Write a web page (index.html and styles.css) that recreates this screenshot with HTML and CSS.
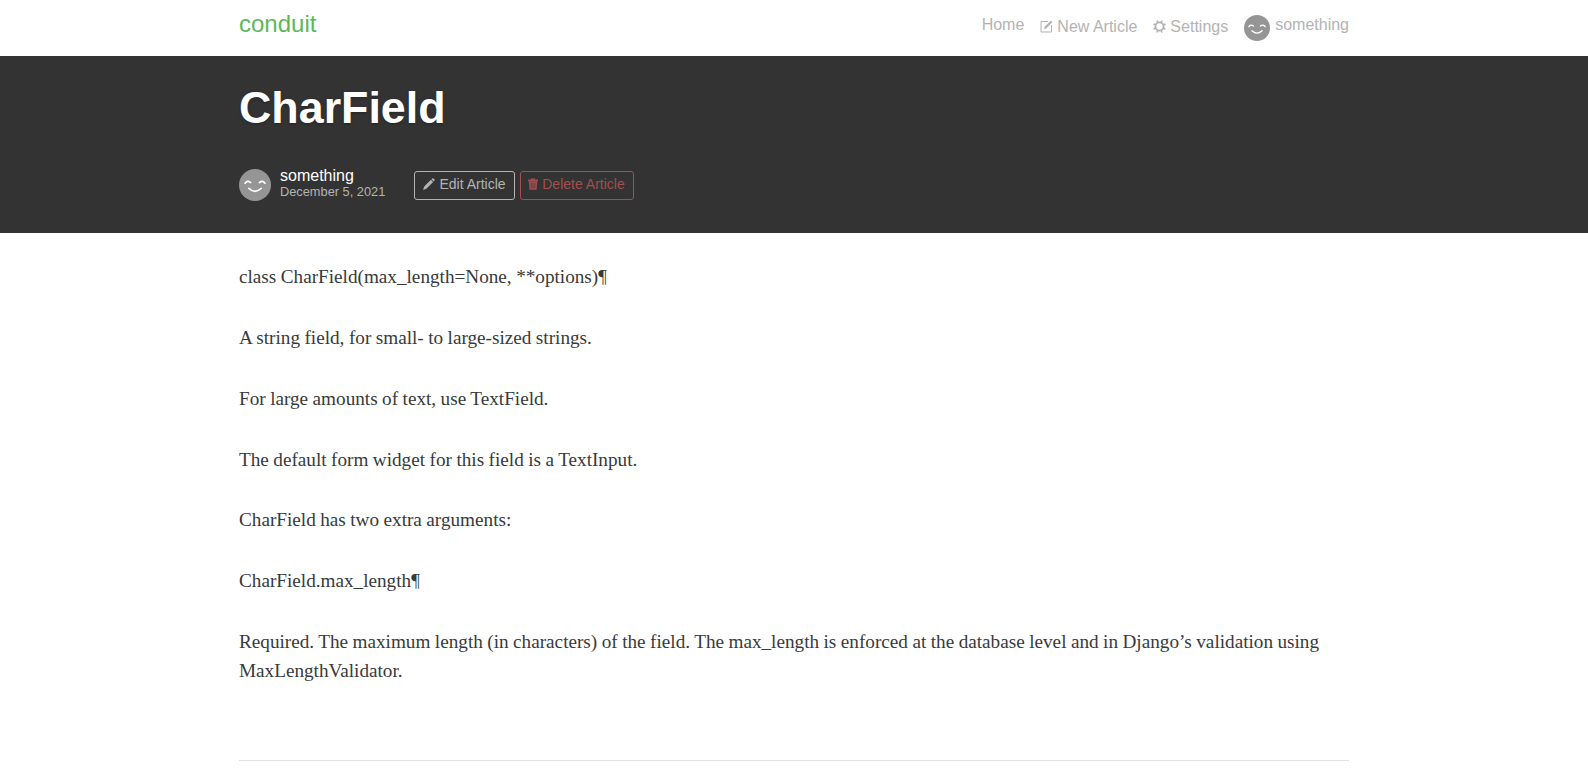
FILE: index.html
```html
<!DOCTYPE html>
<html lang="en">
<head>
<meta charset="utf-8">
<title>CharField — Conduit</title>
<link rel="stylesheet" href="styles.css">
</head>
<body>
<svg class="sprite" aria-hidden="true">
  <symbol id="face" viewBox="0 0 32 32">
    <circle cx="16" cy="16" r="16" fill="#959595"/>
    <g fill="none" stroke="#fff" stroke-width="1.6" stroke-linecap="round" stroke-linejoin="round">
      <path d="M6 14.400Q8.200 10.800 11.700 13.600M20.300 13.600Q23.800 10.800 26 14.400"/>
      <path d="M9.800 19.400Q16 25.200 22.200 19.400"/>
    </g>
  </symbol>
</svg>
<nav class="navbar">
  <div class="container nav-row">
    <a class="brand">conduit</a>
    <ul class="nav">
      <li>Home</li>
      <li class="low"><svg class="i-compose" viewBox="0 0 13 13"><path d="M8 1.500H1v10.500h10.500V5" fill="none" stroke="currentColor"/><path d="M4 9l.6-2.200L11 .5l1.500 1.500-6.300 6.400z" fill="currentColor"/></svg>New Article</li>
      <li class="low"><svg class="i-gear" viewBox="0 0 14 14"><circle cx="7" cy="7" r="4.400" fill="none" stroke="currentColor" stroke-width="2"/><path d="M4.300.5l1 2.500M9.700.5l-1 2.500M4.300 13.500l1-2.500M9.700 13.500l-1-2.500M.5 4.300l2.500 1M.5 9.700l2.500-1M13.500 4.300l-2.500 1M13.500 9.700l-2.500-1" stroke="currentColor" stroke-width="1.700"/></svg>Settings</li>
      <li class="user"><svg class="nav-pic"><use href="#face"/></svg>something</li>
    </ul>
  </div>
</nav>
<header class="banner">
  <div class="container">
    <h1>CharField</h1>
    <div class="meta">
      <svg class="avatar"><use href="#face"/></svg>
      <div class="info"><a>something</a><span>December 5, 2021</span></div>
      <button class="btn edit"><svg viewBox="0 0 12 12"><path d="M0 12l1.200-3.400L7.900 1.800l2.200 2.200L3.400 10.700zM8.500 1.200l.8-.8q.5-.5 1.100 0l1.100 1.100q.5.600 0 1.100l-.8.8z" fill="currentColor"/></svg>Edit Article</button>
      <button class="btn delete"><svg viewBox="0 0 10 12"><path d="M0 1.500h3V.5h4v1h3v1.700H0zM.7 3.600h8.600L8.500 11.800h-7z" fill="currentColor"/><path d="M3 4.800l.3 5.700M5 4.800v5.700M7 4.800l-.3 5.700" stroke="#333" stroke-width=".6"/></svg>Delete Article</button>
    </div>
  </div>
</header>
<main class="container article">
  <p>class CharField(max_length=None, **options)¶</p>
  <p>A string field, for small- to large-sized strings.</p>
  <p>For large amounts of text, use TextField.</p>
  <p>The default form widget for this field is a TextInput.</p>
  <p>CharField has two extra arguments:</p>
  <p>CharField.max_length¶</p>
  <p>Required. The maximum length (in characters) of the field. The max_length is enforced at the database level and in Django’s validation using MaxLengthValidator.</p>
  <hr>
</main>
</body>
</html>
```
FILE: styles.css
```css
* { box-sizing: border-box; }
body { margin: 0; color: #373a3c; font: 16px/1.5 "Liberation Sans", Arial, sans-serif; background: #fff; overflow: hidden; }
.sprite { display: none; }
.container { width: 1140px; margin: 0 auto; padding: 0 15px; }
.navbar { height: 56px; padding-top: 8px; }
.nav-row { display: flex; justify-content: space-between; align-items: flex-start; }
.brand { color: #5cb85c; font-size: 24px; line-height: 32px; }
.nav { display: flex; list-style: none; gap: 16px; margin: 0; padding: 5px 0 0; color: #b3b3b3; line-height: 24px; }
.low { padding-top: 2px; }
.nav svg { width: 13px; height: 13px; margin-right: 4px; vertical-align: -1px; }
.user { display: flex; }
.nav .nav-pic { width: 26px; height: 26px; margin: 2px 5px 0 0; }
.banner { height: 177px; background: #333; color: #fff; padding-top: 27px; }
h1 { margin: 0; font-size: 44.8px; line-height: 49px; font-weight: 700; text-shadow: 0 1px 3px rgba(0, 0, 0, .3); }
.meta { display: flex; margin-top: 37px; }
.avatar { width: 32px; height: 32px; }
.info { width: 134px; margin: -1px 0 0 9px; display: flex; flex-direction: column; }
.info a { line-height: 16px; }
.info span { font-size: 12.8px; line-height: 16px; color: #b3b3b3; }
.btn { height: 29px; border: 1px solid #b3b3b3; border-radius: 3px; background: none; color: #b3b3b3; font: 14px/21px "Liberation Sans", Arial, sans-serif; padding: 0 8px 2px; margin: 2px 5px 0 0; white-space: nowrap; }
.btn svg { width: 12px; height: 12px; margin-right: 4px; vertical-align: -1px; }
.edit { width: 101px; }
.delete { width: 114px; padding-left: 7px; color: #a05050; border-color: #a05050; }
.delete svg { width: 10px; }
.article { padding-top: 30.3px; font: 19.2px/28.8px "Liberation Serif", "Times New Roman", serif; word-spacing: -.32px; }
p { margin: 0 0 32px; }
hr { border: 0; border-top: 1px solid #e2e2e2; margin: 74.5px 0 0; }
```
